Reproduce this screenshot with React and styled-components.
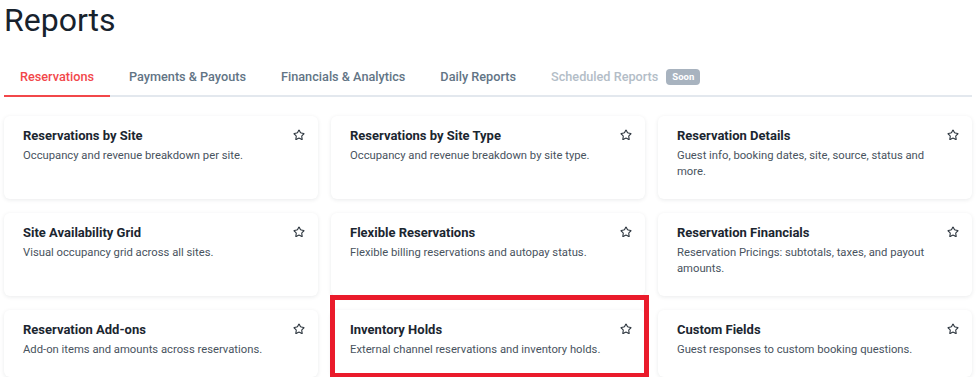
import React, { useState } from 'react'
import styled, { createGlobalStyle } from 'styled-components'
import { Star } from 'lucide-react'

const tabs = [
    { label: 'Reservations' },
    { label: 'Payments & Payouts' },
    { label: 'Financials & Analytics' },
    { label: 'Daily Reports' },
    { label: 'Scheduled Reports', disabled: true, badge: 'Soon' },
]

const reports = [
    { title: 'Reservations by Site', text: 'Occupancy and revenue breakdown per site.' },
    { title: 'Reservations by Site Type', text: 'Occupancy and revenue breakdown by site type.' },
    { title: 'Reservation Details', text: 'Guest info, booking dates, site, source, status and more.' },
    { title: 'Site Availability Grid', text: 'Visual occupancy grid across all sites.' },
    { title: 'Flexible Reservations', text: 'Flexible billing reservations and autopay status.' },
    { title: 'Reservation Financials', text: 'Reservation Pricings: subtotals, taxes, and payout amounts.' },
    { title: 'Reservation Add-ons', text: 'Add-on items and amounts across reservations.' },
    { title: 'Inventory Holds', text: 'External channel reservations and inventory holds.', highlight: true },
    { title: 'Custom Fields', text: 'Guest responses to custom booking questions.' },
]

const Reports = () => {
    const [activeTab, setActiveTab] = useState(0)

    return (
        <Page>
            <GlobalStyle />
            <Title>Reports</Title>
            <TabBar>
                {tabs.map((tab, index) => (
                    <Tab
                        key={tab.label}
                        $active={activeTab === index}
                        $disabled={tab.disabled}
                        onClick={() => !tab.disabled && setActiveTab(index)}>
                        {tab.label}
                        {tab.badge && <Badge>{tab.badge}</Badge>}
                    </Tab>
                ))}
            </TabBar>
            <Grid>
                {reports.map(report => (
                    <Card key={report.title}>
                        <CardHead>
                            <CardTitle>{report.title}</CardTitle>
                            <StarButton>
                                <Star size={12} strokeWidth={2.2} />
                            </StarButton>
                        </CardHead>
                        <CardText>{report.text}</CardText>
                        {report.highlight && <Highlight />}
                    </Card>
                ))}
            </Grid>
        </Page>
    )
}

export default Reports

const GlobalStyle = createGlobalStyle`
    body {
        margin: 0;
        background: #ffffff;
        font-family: Roboto, "Liberation Sans", sans-serif;
        -webkit-font-smoothing: antialiased;
    }
`

const Page = styled.div`
    width: 968px;
    padding: 2px 8px 0 4px;
`

const Title = styled.h1`
    margin: 0;
    font-size: 32px;
    font-weight: 400;
    line-height: 37px;
    color: #17222d;
`

const TabBar = styled.div`
    display: flex;
    gap: 3px;
    margin-top: 20px;
    border-bottom: 2px solid #e3e8ee;
`

const Tab = styled.div`
    display: flex;
    align-items: center;
    padding: 10px 16px 10px;
    margin-bottom: -2px;
    font-size: 12.7px;
    font-weight: 500;
    line-height: 16px;
    cursor: ${props => props.$disabled ? 'default' : 'pointer'};
    color: ${props => props.$active ? '#f2474a' : props.$disabled ? '#b3bdc7' : '#627485'};
    border-bottom: 2px solid ${props => props.$active ? '#f2474a' : 'transparent'};
`

const Badge = styled.span`
    margin-left: 8px;
    padding: 0 6px;
    height: 16px;
    display: inline-flex;
    align-items: center;
    border-radius: 4px;
    background: #a8b3bf;
    color: #ffffff;
    font-size: 9.5px;
    font-weight: 700;
`

const Grid = styled.div`
    display: grid;
    grid-template-columns: repeat(3, 1fr);
    column-gap: 13px;
    row-gap: 14px;
    margin-top: 19px;
`

const Card = styled.div`
    position: relative;
    padding: 11px 13px 19px 19px;
    background: #ffffff;
    border-radius: 6px;
    box-shadow: 0 1px 4px rgba(20, 30, 45, 0.09);
`

const CardHead = styled.div`
    display: flex;
    justify-content: space-between;
    align-items: flex-start;
`

const CardTitle = styled.div`
    font-size: 13px;
    font-weight: 700;
    line-height: 18px;
    color: #1b2630;
`

const StarButton = styled.div`
    display: flex;
    margin-top: 2px;
    color: #2a333c;
`

const CardText = styled.div`
    margin-top: 3px;
    padding-right: 10px;
    font-size: 11.25px;
    line-height: 16px;
    color: #48535e;
`

const Highlight = styled.div`
    position: absolute;
    left: -1px;
    top: -15px;
    width: 319px;
    height: 83px;
    box-sizing: border-box;
    border: 5px solid #ea1b2b;
    pointer-events: none;
`
